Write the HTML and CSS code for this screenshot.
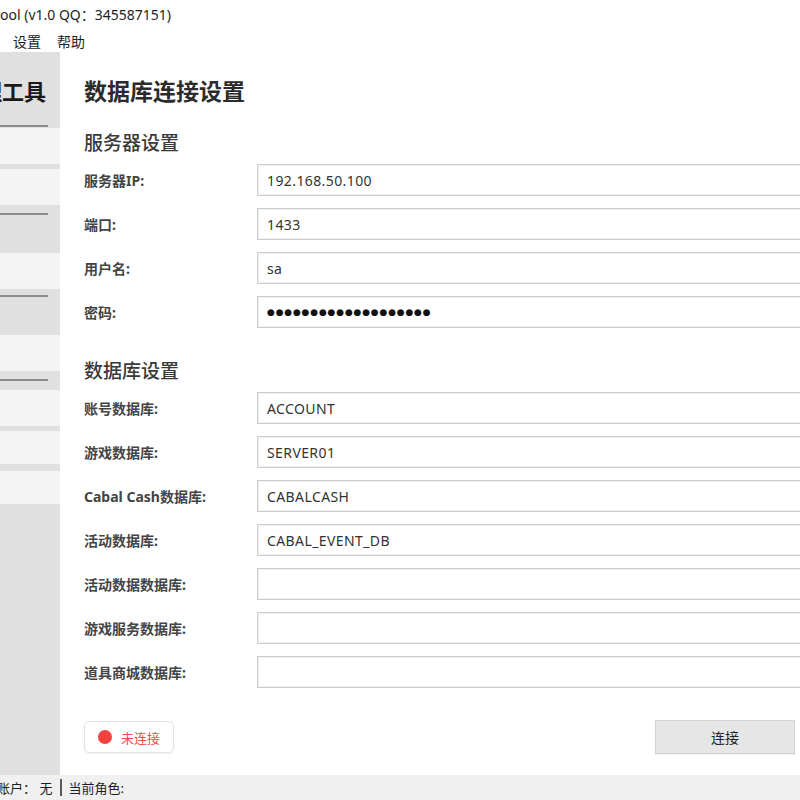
FILE: index.html
```html
<!DOCTYPE html>
<html lang="zh-CN">
<head>
<meta charset="utf-8">
<title>Cabal Tool</title>
<link rel="stylesheet" href="styles.css">
</head>
<body>
<div class="window">
  <div class="titlebar">ool (v1.0 QQ：345587151)</div>
  <div class="menubar">
    <span class="menu-item">设置</span>
    <span class="menu-item">帮助</span>
  </div>
  <div class="app">
    <aside class="sidebar">
      <div class="side-header"><span class="side-title">管理工具</span></div>
      <div class="side-line"></div>
      <div class="gap-1"></div>
      <div class="nav-item"></div>
      <div class="gap-5"></div>
      <div class="nav-item"></div>
      <div class="nav-group group-lg"><div class="side-line"></div></div>
      <div class="nav-item"></div>
      <div class="nav-group group-md"><div class="side-line"></div></div>
      <div class="nav-item"></div>
      <div class="nav-group group-sm"><div class="side-line"></div></div>
      <div class="nav-item"></div>
      <div class="gap-5"></div>
      <div class="nav-item short"></div>
      <div class="gap-7"></div>
      <div class="nav-item short"></div>
    </aside>
    <main class="main">
      <h1 class="page-title">数据库连接设置</h1>
      <h2 class="section-title">服务器设置</h2>
      <div class="rows">
        <div class="row"><label class="label">服务器IP:</label><input class="field" type="text" value="192.168.50.100" readonly></div>
        <div class="row"><label class="label">端口:</label><input class="field" type="text" value="1433" readonly></div>
        <div class="row"><label class="label">用户名:</label><input class="field" type="text" value="sa" readonly></div>
        <div class="row"><label class="label">密码:</label><input class="field pw" type="text" value="●●●●●●●●●●●●●●●●●●●" readonly></div>
      </div>
      <h2 class="section-title second">数据库设置</h2>
      <div class="rows">
        <div class="row"><label class="label">账号数据库:</label><input class="field" type="text" value="ACCOUNT" readonly></div>
        <div class="row"><label class="label">游戏数据库:</label><input class="field" type="text" value="SERVER01" readonly></div>
        <div class="row"><label class="label">Cabal Cash数据库:</label><input class="field" type="text" value="CABALCASH" readonly></div>
        <div class="row"><label class="label">活动数据库:</label><input class="field" type="text" value="CABAL_EVENT_DB" readonly></div>
        <div class="row"><label class="label">活动数据数据库:</label><input class="field" type="text" value="" readonly></div>
        <div class="row"><label class="label">游戏服务数据库:</label><input class="field" type="text" value="" readonly></div>
        <div class="row"><label class="label">道具商城数据库:</label><input class="field" type="text" value="" readonly></div>
      </div>
      <div class="actions">
        <div class="status-badge"><span class="dot"></span><span class="status-text">未连接</span></div>
        <button class="btn">连接</button>
      </div>
    </main>
  </div>
  <footer class="statusbar">
    <span class="status-item first">账户：&nbsp;无</span>
    <span class="status-sep"></span>
    <span class="status-item">当前角色:</span>
  </footer>
</div>
</body>
</html>
```
FILE: styles.css
```css
html, body {
  margin: 0;
  padding: 0;
  width: 800px;
  height: 800px;
  overflow: hidden;
  background: #ffffff;
}
body {
  font-family: "Noto Sans", "Noto Sans CJK SC", sans-serif;
  font-size: 13px;
  color: #222;
}
.window {
  display: flex;
  flex-direction: column;
  width: 800px;
  height: 800px;
}
.titlebar {
  height: 28px;
  line-height: 30px;
  font-size: 14px;
  color: #1e1e1e;
  white-space: nowrap;
  background: #fff;
}
.menubar {
  height: 24px;
  display: flex;
  align-items: center;
  gap: 16px;
  padding: 2px 0 0 13px;
  box-sizing: border-box;
  font-size: 14px;
  color: #1e1e1e;
  background: #fff;
}
.app {
  display: flex;
  height: 723px;
}
.sidebar {
  width: 60px;
  flex: none;
  background: #e0e0e0;
  display: flex;
  flex-direction: column;
  overflow: hidden;
}
.side-header {
  height: 73px;
  display: flex;
  align-items: center;
  justify-content: flex-end;
  padding: 2px 14px 0 0;
  box-sizing: border-box;
  overflow: hidden;
}
.side-title {
  font-size: 22px;
  font-weight: 700;
  color: #1a1a1a;
  white-space: nowrap;
  font-family: "Noto Sans CJK SC", sans-serif;
}
.side-line {
  width: 48px;
  height: 2px;
  background: #8c8c8c;
  flex: none;
}
.gap-1 { height: 1px; flex: none; }
.gap-5 { height: 5px; flex: none; }
.gap-7 { height: 7px; flex: none; }
.nav-item {
  height: 36px;
  flex: none;
  background: #f4f4f4;
}
.nav-item.short { height: 33px; }
.nav-group {
  flex: none;
  box-sizing: border-box;
}
.group-lg { height: 48px; padding-top: 8px; }
.group-md { height: 46px; padding-top: 6px; }
.group-sm { height: 19px; padding-top: 8px; }

.main {
  flex: none;
  width: 740px;
  background: #fff;
  padding: 23px 0 0 24px;
  box-sizing: border-box;
  overflow: hidden;
}
.page-title {
  margin: 0;
  font-size: 23px;
  line-height: 30px;
  font-weight: 700;
  color: #2b2b2b;
  font-family: "Noto Sans CJK SC", sans-serif;
}
.section-title {
  margin: 24px 0 9px;
  font-size: 19px;
  line-height: 26px;
  font-weight: 500;
  color: #3a3a3a;
  font-family: "Noto Sans CJK SC", sans-serif;
}
.section-title.second { margin-top: 29px; }
.rows {
  display: flex;
  flex-direction: column;
  gap: 12px;
}
.row {
  display: grid;
  grid-template-columns: 173px 580px;
  align-items: center;
}
.label {
  font-size: 14px;
  font-weight: 700;
  color: #444;
  white-space: nowrap;
}
.field {
  height: 32px;
  box-sizing: border-box;
  border: 1px solid #cdcdcd;
  box-shadow: inset 0 0 0 1px #efefef;
  background: #fff;
  padding: 0 9px;
  font-family: "Noto Sans", "Noto Sans CJK SC", sans-serif;
  font-size: 14px;
  letter-spacing: 0.4px;
  color: #333;
  outline: none;
  width: 580px;
}
.field.pw {
  font-family: "DejaVu Sans", sans-serif;
  font-size: 9px;
  letter-spacing: 0.8px;
  color: #111;
}
.actions {
  width: 711px;
  margin-top: 32px;
  display: flex;
  justify-content: space-between;
  align-items: center;
}
.status-badge {
  width: 90px;
  height: 32px;
  box-sizing: border-box;
  border: 1px solid #e2e2e2;
  border-radius: 5px;
  box-shadow: 0 1px 2px rgba(0,0,0,0.06);
  display: flex;
  align-items: center;
  padding-left: 13px;
  gap: 9px;
}
.dot {
  width: 14px;
  height: 14px;
  border-radius: 50%;
  background: #f2423f;
}
.status-text {
  color: #ef4b47;
  font-size: 13px;
}
.btn {
  width: 140px;
  height: 34px;
  border: 1px solid #d4d4d4;
  background: #e6e6e6;
  font-family: "Noto Sans CJK SC", sans-serif;
  font-size: 14px;
  color: #222;
  padding: 0;
  box-shadow: 0 1px 1px rgba(0,0,0,0.05);
}
.statusbar {
  height: 25px;
  background: #f0f0f0;
  display: flex;
  align-items: center;
  font-size: 13px;
  color: #1e1e1e;
  white-space: nowrap;
}
.status-item.first { margin-left: -3px; }
.status-sep {
  width: 2px;
  height: 17px;
  background: #5a5a5a;
  margin: 0 6px 0 8px;
}
```
